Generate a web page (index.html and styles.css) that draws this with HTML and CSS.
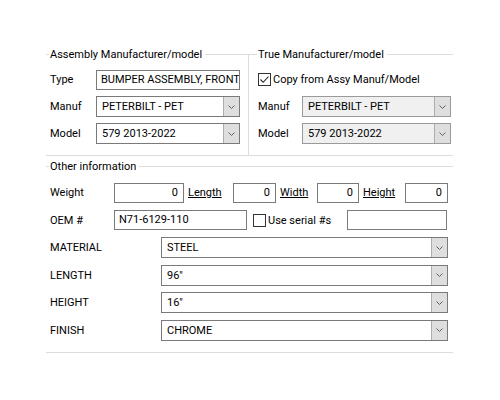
FILE: index.html
```html
<!DOCTYPE html>
<html>
<head>
<meta charset="utf-8">
<title>Part details</title>
<link rel="stylesheet" href="styles.css">
</head>
<body>
<div class="panel">
  <div class="top">
    <section class="group group-left">
      <div class="legend"><span class="legend-text">Assembly Manufacturer/model</span></div>
      <div class="rows">
        <div class="row">
          <span class="lbl lbl-top">Type</span>
          <div class="field field-type">BUMPER ASSEMBLY, FRONT</div>
        </div>
        <div class="row">
          <span class="lbl lbl-top">Manuf</span>
          <div class="combo combo-top">
            <span class="value">PETERBILT - PET</span>
            <span class="drop"><svg width="7" height="4" viewBox="0 0 7 4"><path d="M0.5 0.5 L3.5 3.5 L6.5 0.5" fill="none" stroke="#606060" stroke-width="1"/></svg></span>
          </div>
        </div>
        <div class="row">
          <span class="lbl lbl-top">Model</span>
          <div class="combo combo-top">
            <span class="value">579 2013-2022</span>
            <span class="drop"><svg width="7" height="4" viewBox="0 0 7 4"><path d="M0.5 0.5 L3.5 3.5 L6.5 0.5" fill="none" stroke="#606060" stroke-width="1"/></svg></span>
          </div>
        </div>
      </div>
    </section>
    <section class="group group-right">
      <div class="legend legend-right"><span class="legend-text">True Manufacturer/model</span></div>
      <div class="rows rows-right">
        <div class="row">
          <label class="check"><span class="box checked"><svg width="11" height="11" viewBox="0 0 11 11"><path d="M1.5 5.5 L4.2 8.3 L9.5 2.5" fill="none" stroke="#222" stroke-width="1.1"/></svg></span>Copy from Assy Manuf/Model</label>
        </div>
        <div class="row">
          <span class="lbl lbl-right">Manuf</span>
          <div class="combo combo-right disabled">
            <span class="value">PETERBILT - PET</span>
            <span class="drop"><svg width="7" height="4" viewBox="0 0 7 4"><path d="M0.5 0.5 L3.5 3.5 L6.5 0.5" fill="none" stroke="#606060" stroke-width="1"/></svg></span>
          </div>
        </div>
        <div class="row">
          <span class="lbl lbl-right">Model</span>
          <div class="combo combo-right disabled">
            <span class="value">579 2013-2022</span>
            <span class="drop"><svg width="7" height="4" viewBox="0 0 7 4"><path d="M0.5 0.5 L3.5 3.5 L6.5 0.5" fill="none" stroke="#606060" stroke-width="1"/></svg></span>
          </div>
        </div>
      </div>
    </section>
  </div>

  <section class="other">
    <div class="legend"><span class="legend-text">Other information</span></div>
    <div class="rows rows-other">
      <div class="row">
        <span class="lbl lbl-short">Weight</span>
        <div class="field num w-weight">0</div>
        <span class="link l-length">Length</span>
        <div class="field num w-length">0</div>
        <span class="link l-width">Width</span>
        <div class="field num w-width">0</div>
        <span class="link l-height">Height</span>
        <div class="field num w-height">0</div>
      </div>
      <div class="row">
        <span class="lbl lbl-short">OEM #</span>
        <div class="field w-oem">N71-6129-110</div>
        <label class="check check-serial"><span class="box"></span>Use serial #s</label>
        <div class="field w-serial"></div>
      </div>
      <div class="row">
        <span class="lbl lbl-long">MATERIAL</span>
        <div class="combo combo-wide">
          <span class="value">STEEL</span>
          <span class="drop"><svg width="7" height="4" viewBox="0 0 7 4"><path d="M0.5 0.5 L3.5 3.5 L6.5 0.5" fill="none" stroke="#606060" stroke-width="1"/></svg></span>
        </div>
      </div>
      <div class="row">
        <span class="lbl lbl-long">LENGTH</span>
        <div class="combo combo-wide">
          <span class="value">96"</span>
          <span class="drop"><svg width="7" height="4" viewBox="0 0 7 4"><path d="M0.5 0.5 L3.5 3.5 L6.5 0.5" fill="none" stroke="#606060" stroke-width="1"/></svg></span>
        </div>
      </div>
      <div class="row">
        <span class="lbl lbl-long">HEIGHT</span>
        <div class="combo combo-wide">
          <span class="value">16"</span>
          <span class="drop"><svg width="7" height="4" viewBox="0 0 7 4"><path d="M0.5 0.5 L3.5 3.5 L6.5 0.5" fill="none" stroke="#606060" stroke-width="1"/></svg></span>
        </div>
      </div>
      <div class="row">
        <span class="lbl lbl-long">FINISH</span>
        <div class="combo combo-wide">
          <span class="value">CHROME</span>
          <span class="drop"><svg width="7" height="4" viewBox="0 0 7 4"><path d="M0.5 0.5 L3.5 3.5 L6.5 0.5" fill="none" stroke="#606060" stroke-width="1"/></svg></span>
        </div>
      </div>
    </div>
  </section>
</div>
</body>
</html>
```

FILE: styles.css
```css
* { box-sizing: border-box; }

body {
  margin: 0;
  background: #fff;
  color: #000;
  font-family: Roboto, "Liberation Sans", sans-serif;
  font-size: 11px;
}

.panel {
  width: 407px;
  margin: 54px 0 0 46px;
}

/* group boxes: title sits on a thin rule */
.top {
  display: flex;
  border-bottom: 1px solid #dcdcdc;
}

.group-left {
  width: 203px;
  border-right: 1px solid #dcdcdc;
  padding-bottom: 11px;
}

.group-right {
  flex: 1;
  padding-bottom: 11px;
}

.legend {
  display: flex;
  align-items: center;
  height: 14px;
  margin-top: -7px;
  background: #fff;
}

.legend::before,
.legend::after {
  content: "";
  border-top: 1px solid #dcdcdc;
}

.legend::before { width: 3px; }
.legend::after { flex: 1; }
.legend-right::before { width: 8px; }

.legend-text {
  padding: 0 3px 0 1px;
  white-space: nowrap;
}

.rows {
  display: flex;
  flex-direction: column;
  gap: 6px;
  padding: 8px 0 0 4px;
}

.rows-right { padding-left: 9px; }

.row {
  display: flex;
  align-items: center;
  height: 21px;
}

.lbl { flex: none; }
.lbl-top { width: 46px; }
.lbl-right { width: 44px; }
.lbl-short { width: 64px; }
.lbl-long { width: 111px; }

/* text boxes */
.field {
  height: 20px;
  border: 1px solid #7a7a7a;
  background: #fff;
  padding: 0 4px;
  line-height: 18px;
  white-space: nowrap;
  overflow: hidden;
}

.field-type { width: 144px; }
.num { text-align: right; padding-right: 5px; }
.w-weight { width: 70px; }
.w-length { width: 43px; }
.w-width { width: 42px; }
.w-height { width: 43px; }
.w-oem { width: 133px; }
.w-serial { width: 100px; margin-left: auto; margin-right: 6px; }

.link {
  text-decoration: underline;
  padding-left: 4px;
}
.l-length { width: 49px; }
.l-width { width: 41px; }
.l-height { width: 46px; }

/* drop-down lists */
.combo {
  display: flex;
  height: 21px;
  border: 1px solid #7a7a7a;
  background: #fff;
}

.combo-top { width: 144px; }
.combo-right { width: 149px; }
.combo-wide { width: 287px; }

.combo.disabled {
  background: #f0f0f0;
  border-color: #9a9a9a;
}

.value {
  flex: 1;
  padding-left: 5px;
  line-height: 19px;
  white-space: nowrap;
  overflow: hidden;
}

.drop {
  width: 16px;
  flex: none;
  display: flex;
  align-items: center;
  justify-content: center;
  background: #dedede;
  border-left: 1px solid #adadad;
}

/* check boxes */
.check {
  display: flex;
  align-items: center;
  white-space: nowrap;
}

.box {
  width: 13px;
  height: 13px;
  border: 1px solid #333;
  background: #fff;
  margin-right: 2px;
  display: flex;
  align-items: center;
  justify-content: center;
}

.check-serial { margin-left: 6px; }

/* other information */
.other {
  border-bottom: 1px solid #dcdcdc;
  padding-bottom: 11px;
}

.other > .legend { margin-top: 3px; }

.rows-other {
  gap: 6.5px;
  padding-top: 9px;
}
```
